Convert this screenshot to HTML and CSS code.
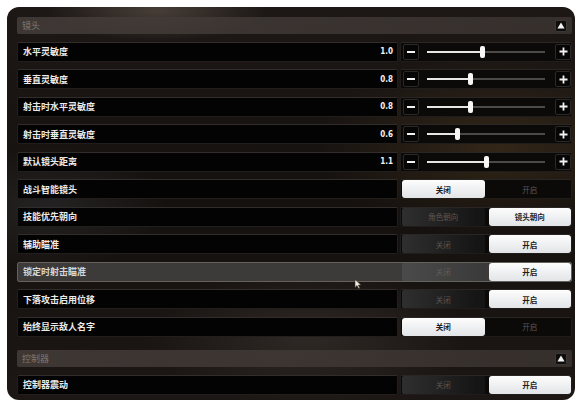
FILE: index.html
```html
<!DOCTYPE html>
<html lang="zh-CN">
<head>
<meta charset="utf-8">
<title>设置</title>
<link rel="stylesheet" href="styles.css">
</head>
<body>
<div class="panel">
  <section class="section">
    <div class="head"><span>镜头</span><span class="collapse"><svg width="8" height="7" viewBox="0 0 8 7"><path d="M4 0.5 L7.6 6.5 L0.4 6.5 Z" fill="#f2f2f2"/></svg></span></div>

    <div class="row">
      <div class="label"><span>水平灵敏度</span><span class="val">1.0</span></div>
      <div class="ctrl slider">
        <span class="step"><span class="minus"></span></span>
        <span class="track" style="--p:47%"><span class="thumb"></span></span>
        <span class="step"><svg width="9" height="9" viewBox="0 0 9 9"><path d="M4.5 0.5V8.5M0.5 4.5H8.5" stroke="#f2f2f2" stroke-width="1.8"/></svg></span>
      </div>
    </div>
    <div class="row">
      <div class="label"><span>垂直灵敏度</span><span class="val">0.8</span></div>
      <div class="ctrl slider">
        <span class="step"><span class="minus"></span></span>
        <span class="track" style="--p:37%"><span class="thumb"></span></span>
        <span class="step"><svg width="9" height="9" viewBox="0 0 9 9"><path d="M4.5 0.5V8.5M0.5 4.5H8.5" stroke="#f2f2f2" stroke-width="1.8"/></svg></span>
      </div>
    </div>
    <div class="row">
      <div class="label"><span>射击时水平灵敏度</span><span class="val">0.8</span></div>
      <div class="ctrl slider">
        <span class="step"><span class="minus"></span></span>
        <span class="track" style="--p:37%"><span class="thumb"></span></span>
        <span class="step"><svg width="9" height="9" viewBox="0 0 9 9"><path d="M4.5 0.5V8.5M0.5 4.5H8.5" stroke="#f2f2f2" stroke-width="1.8"/></svg></span>
      </div>
    </div>
    <div class="row">
      <div class="label"><span>射击时垂直灵敏度</span><span class="val">0.6</span></div>
      <div class="ctrl slider">
        <span class="step"><span class="minus"></span></span>
        <span class="track" style="--p:26%"><span class="thumb"></span></span>
        <span class="step"><svg width="9" height="9" viewBox="0 0 9 9"><path d="M4.5 0.5V8.5M0.5 4.5H8.5" stroke="#f2f2f2" stroke-width="1.8"/></svg></span>
      </div>
    </div>
    <div class="row">
      <div class="label"><span>默认镜头距离</span><span class="val">1.1</span></div>
      <div class="ctrl slider">
        <span class="step"><span class="minus"></span></span>
        <span class="track" style="--p:50%"><span class="thumb"></span></span>
        <span class="step"><svg width="9" height="9" viewBox="0 0 9 9"><path d="M4.5 0.5V8.5M0.5 4.5H8.5" stroke="#f2f2f2" stroke-width="1.8"/></svg></span>
      </div>
    </div>

    <div class="row">
      <div class="label"><span>战斗智能镜头</span></div>
      <div class="ctrl toggle"><span class="seg on">关闭</span><span class="seg">开启</span></div>
    </div>
    <div class="row">
      <div class="label"><span>技能优先朝向</span></div>
      <div class="ctrl toggle"><span class="seg dim">角色朝向</span><span class="seg on">镜头朝向</span></div>
    </div>
    <div class="row">
      <div class="label"><span>辅助瞄准</span></div>
      <div class="ctrl toggle"><span class="seg dim">关闭</span><span class="seg on">开启</span></div>
    </div>
    <div class="row hl">
      <div class="label"><span>锁定时射击瞄准</span></div>
      <div class="ctrl toggle"><span class="seg dim">关闭</span><span class="seg on">开启</span></div>
    </div>
    <div class="row">
      <div class="label"><span>下落攻击启用位移</span></div>
      <div class="ctrl toggle"><span class="seg dim">关闭</span><span class="seg on">开启</span></div>
    </div>
    <div class="row">
      <div class="label"><span>始终显示敌人名字</span></div>
      <div class="ctrl toggle"><span class="seg on">关闭</span><span class="seg">开启</span></div>
    </div>
  </section>

  <section class="section">
    <div class="head"><span>控制器</span><span class="collapse"><svg width="8" height="7" viewBox="0 0 8 7"><path d="M4 0.5 L7.6 6.5 L0.4 6.5 Z" fill="#f2f2f2"/></svg></span></div>
    <div class="row">
      <div class="label"><span>控制器震动</span></div>
      <div class="ctrl toggle"><span class="seg dim">关闭</span><span class="seg on">开启</span></div>
    </div>
  </section>
</div>
<svg class="cursor" width="8" height="10" viewBox="0 0 8 10"><path d="M1 0.5 L1 8.5 L3 6.6 L4.6 9.5 L5.8 8.9 L4.3 6.1 L7 6.1 Z" fill="#f4efe4" stroke="#3a3028" stroke-width="0.6"/></svg>
</body>
</html>
```

FILE: styles.css
```css
* {
  box-sizing: border-box;
  margin: 0;
  padding: 0;
}

body {
  background: #ffffff;
  width: 585px;
  height: 407px;
  overflow: hidden;
  position: relative;
  font-family: "Noto Sans CJK SC", "Noto Sans", sans-serif;
}

.panel {
  margin: 7px 0 0 7px;
  width: 568px;
  height: 393px;
  border-radius: 12px;
  overflow: hidden;
  padding: 10px 3px 0 10px;
  display: flex;
  flex-direction: column;
  background:
    radial-gradient(ellipse 110px 30px at 150px 4px, rgba(150, 132, 118, 0.35), transparent),
    radial-gradient(ellipse 180px 90px at 490px 140px, rgba(120, 88, 40, 0.28), transparent),
    radial-gradient(ellipse 160px 70px at 300px 330px, rgba(95, 85, 80, 0.3), transparent),
    radial-gradient(ellipse 120px 60px at 40px 200px, rgba(90, 95, 105, 0.22), transparent),
    linear-gradient(180deg, #1d1816 0%, #15110f 50%, #1c1714 100%);
}

.section {
  display: flex;
  flex-direction: column;
  gap: 7.5px;
}

.section + .section {
  margin-top: 13.5px;
}

.head {
  height: 17px;
  display: flex;
  align-items: center;
  justify-content: space-between;
  padding: 0 5px;
  border-radius: 2px;
  background: linear-gradient(90deg, rgba(68, 61, 58, 0.85), rgba(60, 53, 50, 0.8));
  color: #7f7873;
  font-size: 9px;
}

.collapse {
  width: 12px;
  height: 12px;
  background: #0e0d0c;
  border: 1px solid #3c3835;
  border-radius: 2px;
  display: flex;
  align-items: center;
  justify-content: center;
}

.row {
  height: 20px;
  display: grid;
  grid-template-columns: 1fr 172px;
  gap: 2px;
}

.label {
  background: #040303;
  border: 1px solid #221e1c;
  border-top-color: #322d2a;
  border-radius: 2px;
  display: flex;
  align-items: center;
  justify-content: space-between;
  padding: 0 4px 0 5px;
  color: #ecebea;
  font-size: 9px;
  font-weight: 700;
}

.val {
  font-family: "DejaVu Sans Condensed", "Liberation Sans Narrow", "DejaVu Sans", sans-serif;
  font-weight: 700;
  font-size: 8px;
  color: #f2f2f2;
}

.ctrl {
  background: #0c0a09;
  border: 1px solid #1f1c1a;
  border-top-color: #2a2623;
  border-radius: 2px;
}

.slider {
  display: flex;
  align-items: center;
  padding-left: 2px;
}

.step {
  width: 16px;
  height: 16px;
  flex: none;
  background: #070606;
  border: 1px solid #2b2826;
  border-radius: 2px;
  display: flex;
  align-items: center;
  justify-content: center;
}

.minus {
  width: 8px;
  height: 2px;
  background: #f2f2f2;
}

.track {
  position: relative;
  width: 118px;
  height: 2px;
  margin: 0 10px 0 8px;
  background: linear-gradient(90deg, #e6e6e6 var(--p), #4c4a48 var(--p));
}

.thumb {
  position: absolute;
  left: var(--p);
  top: -5px;
  width: 5px;
  height: 12px;
  margin-left: -2.5px;
  background: #f6f6f6;
  border-radius: 2px;
}

.toggle {
  display: grid;
  grid-template-columns: 1fr 1fr;
  gap: 4px;
  padding-left: 1px;
}

.seg {
  display: flex;
  align-items: center;
  justify-content: center;
  font-size: 7.5px;
  color: #5d5752;
  border-radius: 2px;
}

.seg.on {
  background: linear-gradient(180deg, #fdfdfd, #e2e4e7);
  color: #1c1c1c;
  font-weight: 700;
  border-radius: 3px;
}

.seg.dim {
  background: linear-gradient(90deg, #2f2f2f, #151515 90%);
}

.row.hl {
  background: #3d3b39;
  border: 1px solid #64615e;
  border-radius: 2px;
  gap: 0;
}

.row.hl .label,
.row.hl .ctrl {
  background: transparent;
  border: none;
}

.row.hl .label {
  color: #d9d7d5;
}

.row.hl .ctrl {
  padding-left: 3px;
}

.row.hl .seg.dim {
  background: linear-gradient(90deg, #4a4a4a, #3a3a3a);
  color: #5f5c5a;
}

.cursor {
  position: absolute;
  left: 354px;
  top: 279px;
}
```
